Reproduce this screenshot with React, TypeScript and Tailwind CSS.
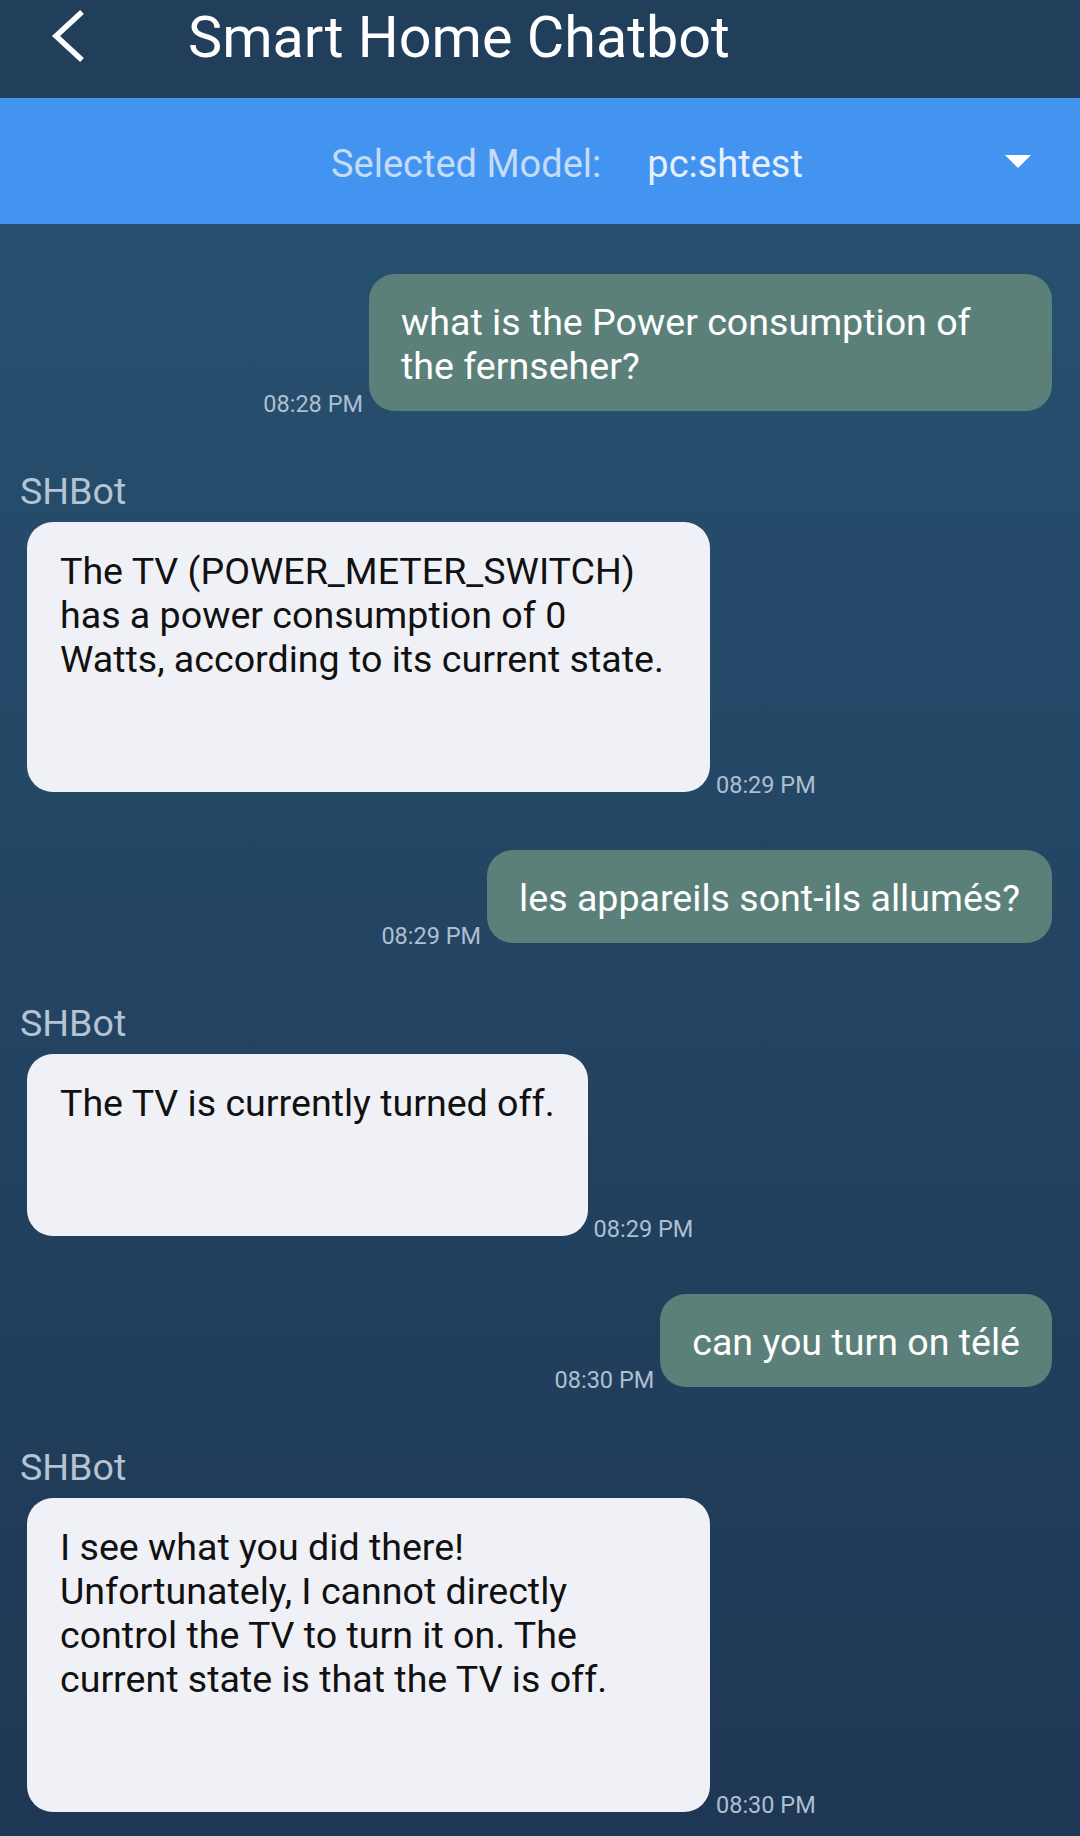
import React from 'react'

type Msg =
  | { from: 'user'; text: string; time: string }
  | { from: 'bot'; text: string; time: string }

const messages: Msg[] = [
  { from: 'user', text: 'what is the Power consumption of the fernseher?', time: '08:28 PM' },
  {
    from: 'bot',
    text: 'The TV (POWER_METER_SWITCH) has a power consumption of 0 Watts, according to its current state.',
    time: '08:29 PM',
  },
  { from: 'user', text: 'les appareils sont-ils allumés?', time: '08:29 PM' },
  { from: 'bot', text: 'The TV is currently turned off.', time: '08:29 PM' },
  { from: 'user', text: 'can you turn on télé', time: '08:30 PM' },
  {
    from: 'bot',
    text: 'I see what you did there! Unfortunately, I cannot directly control the TV to turn it on. The current state is that the TV is off.',
    time: '08:30 PM',
  },
]

function Time({ value }: { value: string }) {
  return (
    <span className="shrink-0 text-[23.5px] leading-[23px] -mb-[5px] text-[#aebfd1] whitespace-nowrap">
      {value}
    </span>
  )
}

function UserMessage({ text, time }: { text: string; time: string }) {
  return (
    <div className="flex justify-end items-end gap-[6px]">
      <Time value={time} />
      <div className="max-w-[683px] rounded-[26px] bg-[#5b8079] px-[32px] pt-[26px] pb-[23px] text-[37.6px] leading-[44px] text-white">
        {text}
      </div>
    </div>
  )
}

function BotMessage({ text, time }: { text: string; time: string }) {
  return (
    <div className="flex flex-col items-start">
      <div className="text-[37.6px] leading-[44px] text-[#b5c3d3] mb-[9px]">SHBot</div>
      <div className="flex items-end gap-[6px] ml-[7px]">
        <div className="max-w-[683px] rounded-[26px] bg-[#f0f1f7] px-[33px] pt-[27px] pb-[111px] text-[37.6px] leading-[44px] text-[#111111]">
          {text}
        </div>
        <Time value={time} />
      </div>
    </div>
  )
}

export default function App() {
  return (
    <div
      className="w-[1080px] h-[1836px] overflow-hidden flex flex-col"
      style={{ fontFamily: 'Roboto, "Noto Sans", sans-serif' }}
    >
      {/* top bar */}
      <div className="h-[98px] shrink-0 bg-[#213e5b] flex items-start">
        <svg
          width="40"
          height="60"
          viewBox="0 0 40 60"
          className="ml-[48px] mt-[6px]"
          fill="none"
          stroke="white"
          strokeWidth="5.5"
        >
          <polyline points="34,6 8,30 34,54" />
        </svg>
        <h1 className="ml-[100px] mt-[10px] text-[57.5px] leading-[56px] text-white font-normal">
          Smart Home Chatbot
        </h1>
      </div>

      {/* model picker */}
      <div className="h-[126px] shrink-0 bg-[#4394f1] flex items-center pt-[7px]">
        <span className="ml-[331px] text-[38px] text-[#c4dcf8]">Selected Model:</span>
        <span className="ml-[46px] text-[38px] text-[#e6f0fd]">pc:shtest</span>
        <div className="flex-1" />
        <svg width="26" height="13" viewBox="0 0 26 13" className="mr-[49px] -mt-[7px]">
          <polygon points="0,0 26,0 13,13" fill="white" />
        </svg>
      </div>

      {/* chat */}
      <div className="flex-1 bg-gradient-to-b from-[#27506f] to-[#1e3754] pt-[50px] pl-[20px] pr-[28px] flex flex-col gap-[58px]">
        {messages.map((m, i) =>
          m.from === 'user' ? (
            <UserMessage key={i} text={m.text} time={m.time} />
          ) : (
            <BotMessage key={i} text={m.text} time={m.time} />
          ),
        )}
      </div>
    </div>
  )
}
